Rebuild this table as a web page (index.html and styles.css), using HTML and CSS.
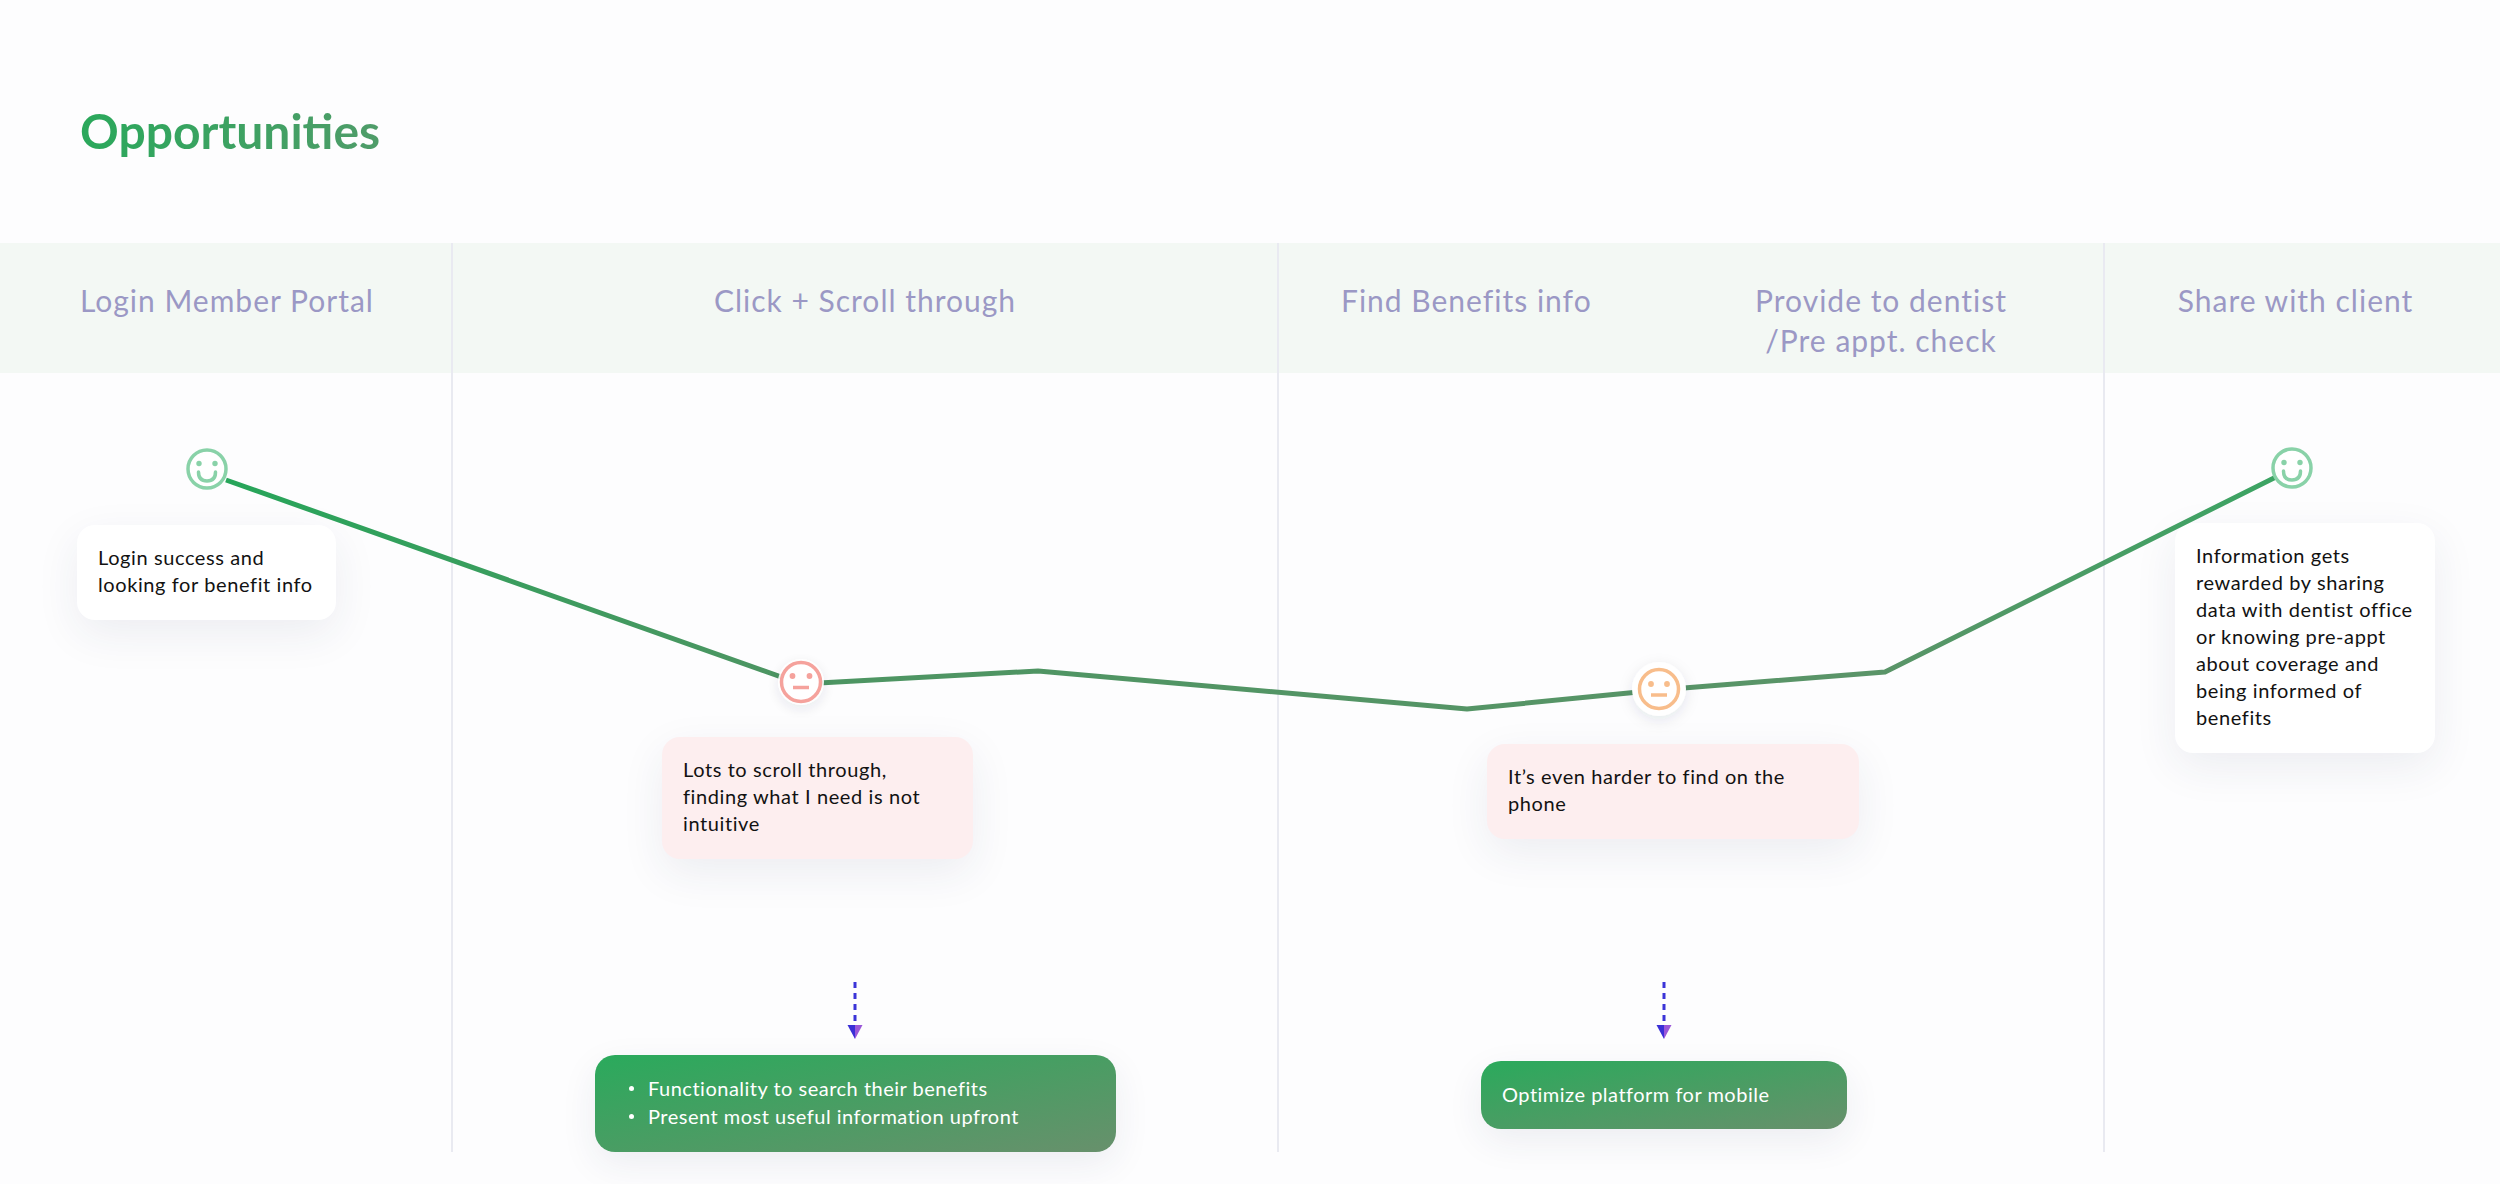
FILE: index.html
```html
<!DOCTYPE html>
<html lang="en">
<head>
<meta charset="utf-8">
<title>Opportunities</title>
<link rel="stylesheet" href="styles.css">
</head>
<body>
<h1 class="title">Opportunities</h1>

<div class="board">
  <div class="hcell h1">Login Member Portal</div>
  <div class="hcell h2 ruled">Click + Scroll through</div>
  <div class="hcell h3 ruled">
    <span class="h-find">Find Benefits info</span>
    <span class="h-provide">Provide to dentist<br>/Pre appt. check</span>
  </div>
  <div class="hcell h4 ruled">Share with client</div>

  <div class="col col1">
    <div class="card card-1">Login success and<br>looking for benefit info</div>
  </div>
  <div class="col col2 ruled">
    <div class="card pink card-2">Lots to scroll through,<br>finding what I need is not<br>intuitive</div>
    <svg class="arrow arrow-2" width="16" height="57" viewBox="0 0 16 57">
      <line x1="8" y1="0" x2="8" y2="42" stroke="#3b34d8" stroke-width="3" stroke-dasharray="6 5"/>
      <polygon points="0.5,43 8,43 8,57" fill="#3a2fd6"/>
      <polygon points="8,43 15.5,43 8,57" fill="#9a56d8"/>
    </svg>
    <div class="goal goal-1">
      <ul class="goal-list">
        <li>Functionality to search their benefits</li>
        <li>Present most useful information upfront</li>
      </ul>
    </div>
  </div>
  <div class="col col3 ruled">
    <div class="card pink card-3">It’s even harder to find on the<br>phone</div>
    <svg class="arrow arrow-3" width="16" height="57" viewBox="0 0 16 57">
      <line x1="8" y1="0" x2="8" y2="42" stroke="#3b34d8" stroke-width="3" stroke-dasharray="6 5"/>
      <polygon points="0.5,43 8,43 8,57" fill="#3a2fd6"/>
      <polygon points="8,43 15.5,43 8,57" fill="#9a56d8"/>
    </svg>
    <div class="goal goal-2">Optimize platform for mobile</div>
  </div>
  <div class="col col4 ruled">
    <div class="card card-4">Information gets<br>rewarded by sharing<br>data with dentist office<br>or knowing pre-appt<br>about coverage and<br>being informed of<br>benefits</div>
  </div>

  <svg class="curve" width="2500" height="910" viewBox="0 243 2500 910">
    <defs>
      <linearGradient id="lg" gradientUnits="userSpaceOnUse" x1="200" y1="0" x2="2300" y2="0">
        <stop offset="0" stop-color="#25a659"/>
        <stop offset="0.27" stop-color="#4c9562"/>
        <stop offset="0.8" stop-color="#5a9468"/>
        <stop offset="1" stop-color="#3aa563"/>
      </linearGradient>
      <filter id="sh" x="-1" y="-1" width="3" height="3">
        <feDropShadow dx="0" dy="4" stdDeviation="7" flood-color="#1e2850" flood-opacity="0.10"/>
      </filter>
    </defs>
    <polyline points="226,480 801,684 1038,671 1467,709 1659,690 1885,672 2292,469" fill="none" stroke="url(#lg)" stroke-width="5" stroke-linejoin="round"/>

    <g class="face-happy">
      <circle cx="207" cy="469" r="19" fill="#fff" stroke="#89d2a8" stroke-width="3.5"/>
      <circle cx="199" cy="463.5" r="2.7" fill="#89d2a8"/>
      <circle cx="215" cy="463.5" r="2.7" fill="#89d2a8"/>
      <path d="M198.5 472 Q198.5 481 207 481 Q215.5 481 215.5 472" fill="none" stroke="#89d2a8" stroke-width="3.5" stroke-linecap="round"/>
    </g>

    <g class="face-red">
      <circle cx="801" cy="682" r="23" fill="#fff" filter="url(#sh)" opacity="0.9"/>
      <circle cx="801" cy="682" r="19.5" fill="#fff" stroke="#f5a29c" stroke-width="3.5"/>
      <circle cx="792.5" cy="676" r="2.9" fill="#f5a29c"/>
      <circle cx="809.5" cy="676" r="2.9" fill="#f5a29c"/>
      <line x1="793" y1="687.5" x2="809" y2="687.5" stroke="#f5a29c" stroke-width="3.5"/>
    </g>

    <g class="face-orange">
      <circle cx="1659" cy="689" r="27" fill="#fff" filter="url(#sh)"/>
      <circle cx="1659" cy="689" r="19.5" fill="#fff" stroke="#f8bd8b" stroke-width="3.5"/>
      <circle cx="1651" cy="684" r="2.9" fill="#f8bd8b"/>
      <circle cx="1667" cy="684" r="2.9" fill="#f8bd8b"/>
      <line x1="1651" y1="695" x2="1667" y2="695" stroke="#f8bd8b" stroke-width="3.5"/>
    </g>

    <g class="face-happy">
      <circle cx="2292" cy="468" r="19" fill="#fff" stroke="#89d2a8" stroke-width="3.5"/>
      <circle cx="2284" cy="462.5" r="2.7" fill="#89d2a8"/>
      <circle cx="2300" cy="462.5" r="2.7" fill="#89d2a8"/>
      <path d="M2283.5 471 Q2283.5 480 2292 480 Q2300.5 480 2300.5 471" fill="none" stroke="#89d2a8" stroke-width="3.5" stroke-linecap="round"/>
    </g>
  </svg>
</div>
</body>
</html>
```

FILE: styles.css
```css
* { box-sizing: border-box; }

html, body {
  margin: 0;
  padding: 0;
}

body {
  width: 2500px;
  height: 1184px;
  overflow: hidden;
  background: #fdfdfe;
  font-family: "Lato", "Noto Sans", sans-serif;
  color: #121212;
}

.title {
  margin: 0 0 83px 80px;
  padding: 102px 0 0 0;
  font-size: 48px;
  line-height: 58px;
  font-weight: 700;
  background: linear-gradient(90deg, #2aa85b 0%, #4f9c69 100%);
  -webkit-background-clip: text;
  background-clip: text;
  color: transparent;
  width: max-content;
}

.board {
  position: relative;
  display: grid;
  grid-template-columns: 451px 826px 826px 397px;
  grid-template-rows: 130px 779px;
}

.ruled {
  border-left: 2px solid #e9eaf1;
}

.hcell {
  background: #f3f8f4;
  padding-top: 37px;
  font-size: 30px;
  line-height: 40px;
  letter-spacing: 1px;
  color: #9b98c5;
  white-space: nowrap;
}

.h1 { padding-left: 80px; }
.h2 { text-align: center; }
.h3 {
  display: grid;
  grid-template-columns: 452px 300px;
}
.h-find { padding-left: 62px; }
.h-provide { text-align: center; }
.h4 { text-align: center; padding-right: 14px; }

.col {
  display: flex;
  flex-direction: column;
  align-items: flex-start;
}

.card {
  background: #ffffff;
  border-radius: 18px;
  padding: 19px 12px 22px 21px;
  font-size: 20px;
  line-height: 27px;
  letter-spacing: 0.6px;
  white-space: nowrap;
  box-shadow: 0 14px 44px rgba(35, 45, 90, 0.08);
}
.card.pink { background: #fdeeef; }

.card-1 { margin: 152px 0 0 77px; width: 259px; }
.card-2 { margin: 364px 0 0 209px; width: 311px; }
.card-3 { margin: 371px 0 0 208px; width: 372px; }
.card-4 { margin: 150px 0 0 70px; width: 260px; }

.arrow { display: block; }
.arrow-2 { margin: 123px 0 0 394px; }
.arrow-3 { margin: 143px 0 0 377px; }

.goal {
  background: linear-gradient(to bottom right, #2aaa5c 0%, #4c9c64 55%, #68906c 100%);
  border-radius: 20px;
  color: #ffffff;
  font-size: 20px;
  line-height: 28px;
  letter-spacing: 0.5px;
  white-space: nowrap;
  box-shadow: 0 12px 36px rgba(35, 45, 90, 0.08);
}
.goal-1 {
  margin: 16px 0 0 142px;
  width: 521px;
  padding: 19px 20px 22px 34px;
}
.goal-2 {
  margin: 22px 0 0 202px;
  width: 366px;
  padding: 19px 20px 21px 21px;
}

.goal-list {
  list-style: none;
  margin: 0;
  padding: 0;
}
.goal-list li {
  position: relative;
  padding-left: 19px;
}
.goal-list li::before {
  content: "";
  position: absolute;
  left: 0;
  top: 12px;
  width: 5px;
  height: 5px;
  border-radius: 50%;
  background: #ffffff;
}

.curve {
  position: absolute;
  left: 0;
  top: 0;
  pointer-events: none;
  z-index: 2;
}
```
